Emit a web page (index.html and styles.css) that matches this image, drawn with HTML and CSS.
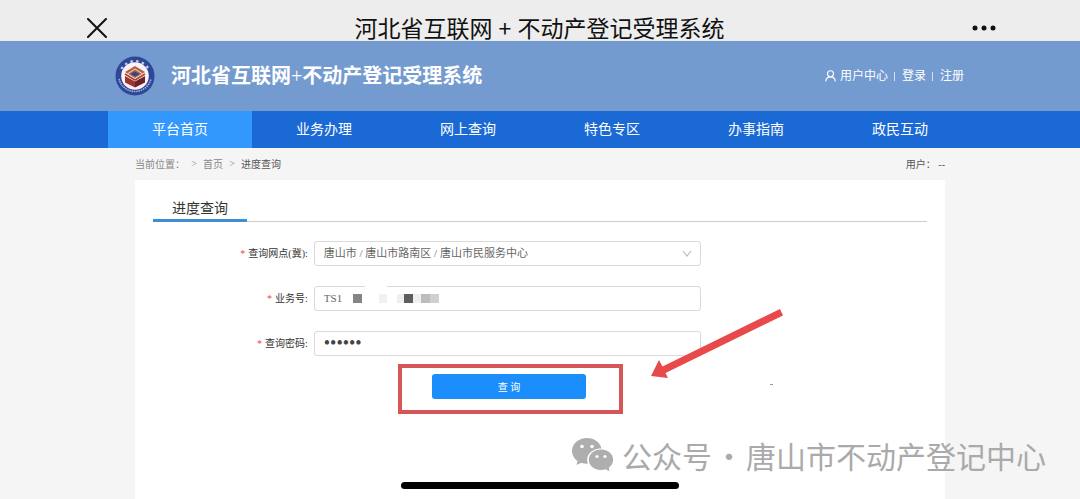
FILE: index.html
```html
<!doctype html>
<html lang="zh-CN">
<head>
<meta charset="utf-8">
<title>河北省互联网+不动产登记受理系统</title>
<link rel="stylesheet" href="styles.css">
</head>
<body>
<div class="titlebar">
	<button class="close" type="button" aria-label="关闭">
		<svg width="20" height="20" viewBox="0 0 20 20"><path d="M1 1L19 19M19 1L1 19" stroke="#111" stroke-width="2" stroke-linecap="round"/></svg>
	</button>
	<div class="title">河北省互联网<span class="plus">+</span>不动产登记受理系统</div>
	<button class="more" type="button" aria-label="更多">
		<svg width="24" height="6" viewBox="0 0 24 6"><circle cx="3" cy="3" r="2.5" fill="#111"/><circle cx="12" cy="3" r="2.5" fill="#111"/><circle cx="21" cy="3" r="2.5" fill="#111"/></svg>
	</button>
</div>
<header class="header">
	<div class="wrap header-in">
		<svg class="logo" width="40" height="40" viewBox="0 0 40 40">
			<circle cx="20" cy="20" r="19.5" fill="#2f4796"/>
			<path d="M6.500 13A15.500 15.500 0 0 1 33.500 13" fill="none" stroke="#c3cdea" stroke-width="2.400" stroke-dasharray="2.400 3.400"/>
			<path d="M4 23A16.500 16.500 0 0 0 36 23" fill="none" stroke="#a3b1dc" stroke-width="1.600" stroke-dasharray="1.500 .8"/>
			<circle cx="20" cy="20" r="13.800" fill="#f7f3f6"/>
			<path d="M10 20L20 25.500V31.500L10 26.500Z" fill="#9c3430"/>
			<path d="M30 20L20 25.500V31.500L30 26.500Z" fill="#6e2128"/>
			<path d="M20 10L30 16L20 22L10 16Z" fill="#b4623e"/>
			<path d="M10 18L20 24L30 18" fill="none" stroke="#a8452f" stroke-width="1.600"/>
			<path d="M13 17.500L20 13L27 17.500" fill="none" stroke="#f3dccc"/>
			<path d="M15.500 18L20 15.500L24.500 18L20 20.500Z" fill="#33468f"/>
		</svg>
		<h1>河北省互联网<span>+</span>不动产登记受理系统</h1>
		<div class="user">
			<svg width="11" height="12" viewBox="0 0 11 12" fill="none" stroke="#fff" stroke-width="1.100"><circle cx="5.500" cy="3.800" r="3"/><path d="M.7 11.500C1 8.500 3 6.900 5.500 6.900S10 8.500 10.300 11.500"/></svg>
			<a href="#">用户中心</a><i></i><a href="#">登录</a><i></i><a href="#">注册</a>
		</div>
	</div>
</header>
<nav class="nav">
	<div class="wrap nav-in">
		<a class="active" href="#">平台首页</a>
		<a href="#">业务办理</a>
		<a href="#">网上查询</a>
		<a href="#">特色专区</a>
		<a href="#">办事指南</a>
		<a href="#">政民互动</a>
	</div>
</nav>
<div class="content">
	<div class="crumb">
		<span>当前位置：</span><span class="sep">&gt;</span><a href="#">首页</a><span class="sep">&gt;</span><span class="here">进度查询</span>
		<span class="who">用户： --</span>
	</div>
	<main class="panel">
		<div class="tabs"><h2>进度查询</h2></div>
		<form class="form">
			<div class="row">
				<label for="site"><b>*</b>查询网点(冀):</label>
				<div class="field">
					<select id="site"><option>唐山市 / 唐山市路南区 / 唐山市民服务中心</option></select>
					<svg class="arrow" width="10" height="8" viewBox="0 0 10 8"><path d="M1 1L5 6L9 1" fill="none" stroke="#bbb" stroke-width="1.200"/></svg>
				</div>
			</div>
			<div class="row">
				<label for="number"><b>*</b>业务号:</label>
				<div class="field">
					<input id="number" type="text" value="TS1">
					<svg class="mosaic" width="92" height="20" viewBox="0 0 92 20">
						<path d="M17 0H39V5H17Z" fill="#fff"/>
						<path d="M5 9H14V18H5Z" fill="#858585"/>
						<path d="M31 9H39V18H31Z" fill="#f1f1f1"/>
						<path d="M49 9H56V18H49Z" fill="#efefef"/>
						<path d="M56 9H65V18H56Z" fill="#5e5e5e"/>
						<path d="M65 9H73V18H65Z" fill="#f0f0f0"/>
						<path d="M73 9H82V18H73Z" fill="#bcbcbc"/>
						<path d="M82 9H91V18H82Z" fill="#d0d0d0"/>
					</svg>
				</div>
			</div>
			<div class="row">
				<label for="pwd"><b>*</b>查询密码:</label>
				<div class="field"><input id="pwd" type="password" value="123456"></div>
			</div>
			<div class="submit">
				<button type="button">查 询</button>
				<div class="mark"></div>
				<svg class="pointer" width="136" height="70" viewBox="0 0 136 70"><path d="M2 67L10 51L13.500 57.500L131 0L134 6.500L16.500 64L19 69Z" fill="#e8494a"/></svg>
				<svg class="speck" width="3" height="2" viewBox="0 0 3 2"><path d="M0 0H3V1H0Z" fill="#999"/></svg>
			</div>
		</form>
	</main>
</div>
<div class="watermark">
	<svg width="42" height="34" viewBox="0 0 42 34">
		<path d="M15 0C6.500 0 0 5.800 0 13C0 17 2 20.500 5.500 23L4.500 27L9.500 24.800C11.500 25.500 13.500 25.800 16 25.600C13 18 19 10.500 29.500 10.500C28 4.500 22.500 0 15 0Z" fill="#aeaeae"/>
		<path d="M29 11.500C22 11.500 16.800 16.200 16.800 21.800S22 32 29 32C30.800 32 32.300 31.700 33.800 31.200L37.500 33.500L36.800 29.700C39.500 27.800 41.200 25 41.200 21.800C41.200 16.200 36 11.500 29 11.500Z" fill="#aeaeae"/>
		<g fill="#fff"><circle cx="10" cy="8.500" r="1.800"/><circle cx="20" cy="8.500" r="1.800"/><circle cx="25" cy="18.500" r="1.600"/><circle cx="33" cy="18.500" r="1.600"/></g>
	</svg>
	<span>公众号<span class="dot">·</span>唐山市不动产登记中心</span>
</div>
<div class="homebar"></div>
</body>
</html>
```
FILE: styles.css
```css
*{
	box-sizing: border-box;
}
body{
	margin: 0;
	min-height: 100vh;
	display: flex;
	flex-direction: column;
	position: relative;
	background: #f5f5f5;
	font-family: "Liberation Serif", "Noto Sans CJK SC", serif;
	color: #444;
}
a{
	color: inherit;
	text-decoration: none;
}
button{
	border: 0;
	padding: 0;
	background: none;
}
svg{
	display: block;
}
.titlebar{
	height: 41px;
	padding: 14px 84px 0 87px;
	display: flex;
	justify-content: space-between;
	align-items: center;
	background: #ededed;
}
.title{
	font: 400 23px/27px "Noto Sans CJK SC", sans-serif;
	color: #111;
	white-space: nowrap;
}
.plus{
	margin: 0 6px;
}
.header{
	background: #739bd0;
	color: #fff;
}
.wrap{
	width: 80%;
	margin: 0 auto;
}
.header-in{
	height: 70px;
	padding: 0 8px 0 7px;
	display: flex;
	align-items: center;
}
.header h1{
	margin: 0 auto 0 16px;
	font-size: 20px;
	font-weight: 700;
	line-height: 28px;
}
.header h1 span{
	font-weight: 400;
}
.user{
	display: flex;
	align-items: center;
	font-size: 12px;
	line-height: 16px;
}
.user svg{
	margin-right: 4px;
}
.user i{
	width: 1px;
	height: 9px;
	margin: 0 7px 0 6px;
	background: #d5e1f2;
}
.nav{
	background: #1a69d4;
}
.nav-in{
	display: grid;
	grid-template-columns: repeat(6, 1fr);
}
.nav a{
	color: #fff;
	font-size: 14px;
	line-height: 37px;
	text-align: center;
}
.nav .active{
	background: #3398fe;
}
.content{
	width: 75%;
	margin: 0 auto;
	flex: 1;
	display: flex;
	flex-direction: column;
}
.crumb{
	height: 32px;
	padding-bottom: 2px;
	display: flex;
	align-items: center;
	font-size: 10px;
	color: #888;
}
.sep{
	width: 18px;
	text-align: center;
}
.here{
	color: #555;
}
.who{
	margin-left: auto;
	color: #555;
}
.panel{
	flex: 1;
	padding: 18px;
	background: #fff;
}
.tabs{
	border-bottom: 1px solid #ccc;
	display: flex;
}
.tabs h2{
	margin: 0 0 -1px;
	padding: 0 19px;
	border-bottom: 3px solid #3f8dd6;
	font-size: 14px;
	font-weight: 400;
	line-height: 21px;
	color: #333;
}
.form{
	padding-top: 19px;
}
.row{
	display: grid;
	grid-template-columns: 20% 50%;
	column-gap: 6px;
	align-items: center;
	margin-bottom: 20px;
}
.row label{
	padding-bottom: 2px;
	font-size: 10px;
	text-align: right;
	color: #333;
}
.row b{
	margin-right: 3px;
	font-weight: 400;
	color: #e8494a;
}
.field{
	position: relative;
}
.field input,
.field select{
	display: block;
	width: 100%;
	height: 25px;
	padding: 0 9px 2px;
	border: 1px solid #d9d9d9;
	border-radius: 3px;
	background: #fff;
	appearance: none;
	font-family: inherit;
	font-size: 11px;
	color: #666;
}
.field input[type=password]{
	padding-bottom: 0;
	font-size: 18px;
	color: #444;
}
.arrow{
	position: absolute;
	right: 9px;
	top: 9px;
}
.mosaic{
	position: absolute;
	left: 34px;
	top: -1px;
}
.submit{
	width: 20%;
	margin: -2px 0 0 36%;
	position: relative;
}
.submit button{
	display: block;
	width: 100%;
	height: 25px;
	border-radius: 3px;
	background: #1b8efb;
	color: #fff;
	font-family: inherit;
	font-size: 10px;
}
.mark{
	position: absolute;
	top: -10px;
	right: -37px;
	bottom: -15px;
	left: -34px;
	border: 4px solid #d65556;
}
.pointer{
	position: absolute;
	left: 217px;
	top: -65px;
}
.speck{
	position: absolute;
	left: 338px;
	top: 10px;
}
.watermark{
	position: absolute;
	right: 34px;
	bottom: 24px;
	display: flex;
	align-items: center;
	gap: 8px;
	color: #aaa;
	font: 400 30px/40px "Noto Sans CJK SC", sans-serif;
	white-space: nowrap;
}
.dot{
	margin: 0 2px;
}
.homebar{
	position: absolute;
	left: 50%;
	bottom: 10px;
	width: 278px;
	height: 7px;
	border-radius: 4px;
	background: #000;
	transform: translateX(-50%);
}
```
